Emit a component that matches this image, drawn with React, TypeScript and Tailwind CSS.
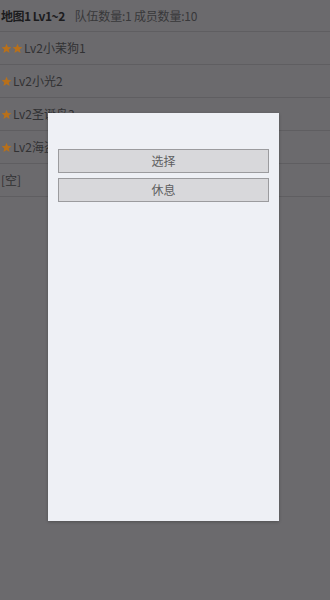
const rows = [
  { stars: 2, name: "Lv2小茉狗1" },
  { stars: 1, name: "Lv2小光2" },
  { stars: 1, name: "Lv2圣诞鸟3" },
  { stars: 1, name: "Lv2海盗4" },
];

function Star() {
  return (
    <svg width="11" height="11" viewBox="0 0 24 24" className="shrink-0">
      <path
        d="M12 1.5l3.1 7.1 7.6.6-5.8 5 1.8 7.5L12 17.7l-6.7 4 1.8-7.5-5.8-5 7.6-.6z"
        fill="#b8701a"
      />
    </svg>
  );
}

export default function App() {
  return (
    <div
      className="relative h-[600px] w-[330px] overflow-hidden bg-[#6b6a6d] text-[12px]"
      style={{ fontFamily: '"Noto Sans CJK SC", "Noto Sans", sans-serif' }}
    >
      <div className="flex h-[32px] items-center gap-[10px] border-b border-[#5f5e61] pl-[1px]">
        <span className="font-bold tracking-[-0.5px] text-[#1c1c1e]">地图1 Lv1~2</span>
        <span className="tracking-[-0.2px] text-[#38383a]">队伍数量:1 成员数量:10</span>
      </div>
      {rows.map((r) => (
        <div
          key={r.name}
          className="flex h-[33px] items-center border-b border-[#5f5e61] pl-[1px] text-[#313133]"
        >
          <span className="mr-[1px] flex">
            {Array.from({ length: r.stars }, (_, i) => (
              <Star key={i} />
            ))}
          </span>
          <span>{r.name}</span>
        </div>
      ))}
      <div className="flex h-[33px] items-center border-b border-[#5f5e61] pl-[1px] text-[#313133]">
        [空]
      </div>

      <div className="absolute left-[48px] top-[113px] flex h-[408px] w-[231px] flex-col gap-[5px] bg-[#eef0f5] px-[10px] pt-[36px] shadow-[0_1px_3px_rgba(0,0,0,0.25)]">
        <button className="h-[24px] w-full border border-[#9b9b9e] bg-[#d8d8db] text-[12px] text-[#5e5e60]">
          选择
        </button>
        <button className="h-[24px] w-full border border-[#9b9b9e] bg-[#d8d8db] text-[12px] text-[#5e5e60]">
          休息
        </button>
      </div>
    </div>
  );
}
